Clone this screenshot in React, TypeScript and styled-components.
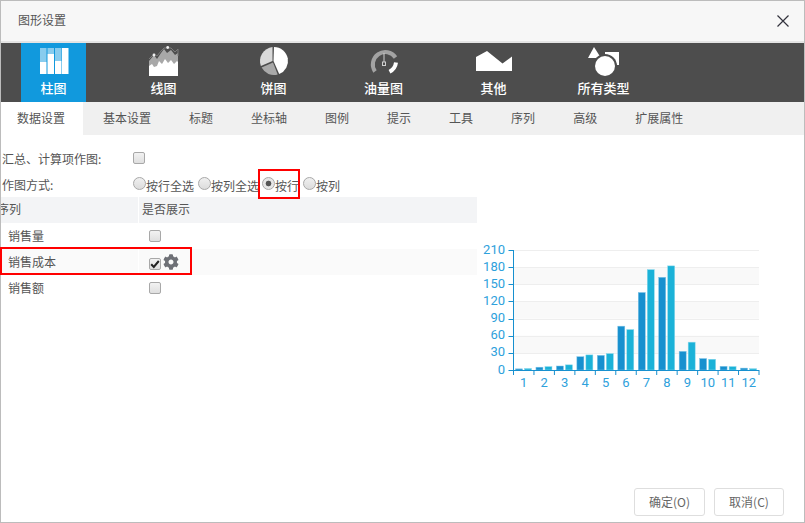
import React from "react";
import styled, { createGlobalStyle } from "styled-components";
import { FaCog } from "react-icons/fa";

const Global = createGlobalStyle`
  html, body { margin: 0; padding: 0; background: #fff; }
  * { box-sizing: border-box; }
  body { font-family: "Noto Sans CJK SC", "Liberation Sans", sans-serif; font-size: 12px; color: #555; }
`;

const Frame = styled.div`
  width: 805px; height: 523px; border: 1px solid #bcbcbc; background: #fff;
  display: flex; flex-direction: column; position: relative;
`;
const Header = styled.div`
  height: 42px; flex: none; background: #f7f7f7; border-bottom: 2px solid #e4e4e4;
  display: flex; align-items: center; justify-content: space-between; padding: 0 15px 4px 17px;
  color: #555; font-size: 12px;
`;
const Close = styled.svg`width: 12px; height: 12px; display: block; margin-top: 3px;`;
const TypeBar = styled.div`
  height: 59px; flex: none; background: #4d4d4d; display: flex; padding-left: 20px; gap: 45px;
`;
const TypeItem = styled.div<{ $active?: boolean }>`
  width: 65px; padding-top: 3px; display: flex; flex-direction: column; align-items: center;
  background: ${(p) => (p.$active ? "#1199dd" : "transparent")};
`;
const TypeIcon = styled.svg`width: 40px; height: 30px; display: block; flex: none;`;
const TypeLabel = styled.div`
  height: 24px; line-height: 24px; color: #fff; font-size: 13px; white-space: nowrap; font-weight: 500;
`;
const Tabs = styled.div`
  height: 33px; flex: none; background: #f0f0f0; display: flex; gap: 4px;
`;
const Tab = styled.div<{ $active?: boolean }>`
  padding: 0 18px 0 16px; line-height: 31px; color: #555; white-space: nowrap;
  background: ${(p) => (p.$active ? "#fff" : "transparent")};
`;
const Body = styled.div`
  flex: 1; display: flex; min-height: 0; padding-top: 10px;
`;
const LeftPanel = styled.div`width: 476px; flex: none;`;
const ChartPanel = styled.div`padding-top: 95px; flex: none;`;
const FormRow = styled.div`
  height: 26px; display: flex; align-items: center; padding-left: 1px; color: #555;
`;
const FormLabel = styled.div`width: 131px; flex: none; white-space: nowrap;`;
const Check = styled.span<{ $on?: boolean }>`
  width: 12px; height: 12px; flex: none; display: inline-flex; align-items: center; justify-content: center;
  border: 1px solid #a8a8a8; border-radius: 2px; background: linear-gradient(#f2f2f2, #dfdfdf);
  margin-top: ${(p) => (p.$on ? "3px" : "-1px")};
`;
const CheckMark = styled.svg`width: 10px; height: 10px; display: block;`;
const RadioGroup = styled.div`display: flex; gap: 4px; align-items: center; height: 100%;`;
const RadioItem = styled.div<{ $marked?: boolean }>`
  position: relative; z-index: 1; display: flex; align-items: center; height: 100%; white-space: nowrap;
  ${(p) =>
    p.$marked
      ? `margin-left: -1px; &::after { content: ""; position: absolute; left: -4px; right: -1px; top: -2px; height: 26px; border: 2px solid #f00; pointer-events: none; }`
      : ""}
`;
const RadioCircle = styled.span<{ $on?: boolean }>`
  width: 13px; height: 13px; flex: none; border-radius: 50%; border: 1px solid #a8a8a8; margin-top: -2px;
  background: ${(p) =>
    p.$on
      ? "radial-gradient(circle, #555 0, #555 2.5px, #e6e6e6 3.2px)"
      : "linear-gradient(#f0f0f0, #dcdcdc)"};
`;
const RadioText = styled.span`margin-top: 3px;`;
const TableRow = styled.div`
  position: relative; display: grid; grid-template-columns: 137px 1fr; column-gap: 1px; height: 26px;
  background: #fff;
`;
const HeadCell = styled.div<{ $clip?: boolean }>`
  background: #f3f4f6; line-height: 24px; padding-left: 3px; overflow: hidden; white-space: nowrap; color: #555;
  text-indent: ${(p) => (p.$clip ? "-7px" : "0")};
`;
const Cell = styled.div<{ $shade?: boolean }>`
  background: ${(p) => (p.$shade ? "#fafafa" : "#fff")}; display: flex; align-items: center; padding-left: 7px;
  color: #555; line-height: 26px;
`;
const CheckCell = styled(Cell)`padding-left: 10px; gap: 2px;`;
const Gear = styled(FaCog)`width: 16px; height: 16px; color: #6e7076; flex: none; margin-top: -1px;`;
const RowMark = styled.div`
  position: absolute; left: -1px; top: -2px; width: 192px; height: 28px; border: 2px solid #f00; pointer-events: none;
`;
const Chart = styled.svg`width: 292px; height: 160px; display: block;`;
const ChartText = styled.text`
  font-family: Roboto, "Liberation Sans", sans-serif; font-size: 13px; fill: #2ea1dc;
`;
const Footer = styled.div`
  flex: none; display: flex; justify-content: flex-end; gap: 9px; padding: 0 20px 6px 0;
`;
const Button = styled.div<{ $w: number }>`
  width: ${(p) => p.$w}px; height: 28px; border: 1px solid #dedede; border-radius: 3px; background: #fff;
  text-align: center; line-height: 26px; color: #666; font-size: 12px;
`;

const BarIcon = () => (
  <TypeIcon viewBox="0 0 40 30">
    <g fill="#fff">
      <rect x="6" y="2" width="6.5" height="14" opacity="0.5" />
      <rect x="6" y="16" width="6.5" height="12" />
      <rect x="13.5" y="2" width="6.5" height="6" opacity="0.5" />
      <rect x="13.5" y="8" width="6.5" height="20" />
      <rect x="21" y="2" width="6.5" height="13" opacity="0.5" />
      <rect x="21" y="15" width="6.5" height="13" />
      <rect x="28" y="2" width="6.5" height="26" />
    </g>
  </TypeIcon>
);
const LineIcon = () => (
  <TypeIcon viewBox="0 0 40 30">
    <polygon fill="#a8a8a8" points="5,15 10,9 13,13 17,7 20,3 23,7 27,4 31,9 34,7 34,30 5,30" />
    <polyline fill="none" stroke="#7a7a7a" strokeWidth="1" points="5,13 10,8 13,10 17,5 20,2 23,2 27,2 31,6 34,3 34,10" />
    <polygon fill="#fff" points="5,20 8,18 10,21 13,20 15,15 18,18 21,13 24,17 27,14 30,18 33,15 34,16 34,30 5,30" />
    <circle cx="10" cy="9" r="1.4" fill="#eee" />
    <circle cx="23.7" cy="1.5" r="1.4" fill="#eee" />
  </TypeIcon>
);
const PieIcon = () => (
  <TypeIcon viewBox="0 0 40 30">
    <path d="M18.5 1.1 A14 14 0 0 0 6.9 20 L18.5 15 Z" fill="#d9d9d9" />
    <path d="M7.6 21.6 A14 14 0 0 0 23.7 28.5 L19 16.5 Z" fill="#a9a9a9" />
    <path d="M20 1 A14 14 0 0 1 25.2 28 L19.5 15 Z" fill="#fff" />
  </TypeIcon>
);
const GaugeIcon = () => (
  <TypeIcon viewBox="0 0 40 30">
    <path d="M11 25.5 A12 12 0 1 1 31.5 11.5" fill="none" stroke="#a3a3a3" strokeWidth="4" />
    <path d="M32 16.5 A12 12 0 0 1 25.5 25.7" fill="none" stroke="#fff" strokeWidth="4" />
    <rect x="19.5" y="7" width="1" height="9" fill="#cfcfcf" />
    <rect x="18.5" y="16" width="3" height="3.5" fill="none" stroke="#cfcfcf" strokeWidth="1" />
  </TypeIcon>
);
const OtherIcon = () => (
  <TypeIcon viewBox="0 0 40 30">
    <polygon fill="#fff" points="2,11 13,5 28.5,17.5 38,10.5 38,25 2,25" />
  </TypeIcon>
);
const AllIcon = () => (
  <TypeIcon viewBox="0 0 40 30">
    <polygon fill="#fff" points="10,1 4,12 17,12" />
    <rect x="21" y="6" width="14" height="13" fill="#fff" />
    <circle cx="21" cy="20" r="12" fill="#4d4d4d" />
    <circle cx="21" cy="20" r="10" fill="#fff" />
  </TypeIcon>
);

const types: { label: string; Icon: React.FC; active?: boolean }[] = [
  { label: "柱图", Icon: BarIcon, active: true },
  { label: "线图", Icon: LineIcon },
  { label: "饼图", Icon: PieIcon },
  { label: "油量图", Icon: GaugeIcon },
  { label: "其他", Icon: OtherIcon },
  { label: "所有类型", Icon: AllIcon },
];
const tabs = ["数据设置", "基本设置", "标题", "坐标轴", "图例", "提示", "工具", "序列", "高级", "扩展属性"];
const radios = [
  { label: "按行全选" },
  { label: "按列全选" },
  { label: "按行", on: true },
  { label: "按列" },
];

const s1 = [2, 4.9, 7, 23.2, 25.6, 76.7, 135.6, 162.2, 32.6, 20, 6.4, 3.3];
const s2 = [2.6, 5.9, 9, 26.4, 28.7, 70.7, 175.6, 182.2, 48.7, 18.8, 6, 2.3];
const X0 = 513.5;
const X1 = 759;
const Y0 = 370;
const YT = 250;
const step = (X1 - X0) / 12;
const yOf = (v: number) => Y0 - ((Y0 - YT) * v) / 210;
const ticks = [0, 30, 60, 90, 120, 150, 180, 210];

const BarChart = () => (
  <Chart viewBox="477 240 292 160">
    {[[150, 180], [90, 120], [30, 60]].map(([a, b]) => (
      <rect key={a} x={X0} y={yOf(b)} width={X1 - X0} height={yOf(a) - yOf(b)} fill="#f9f9f9" />
    ))}
    {ticks.slice(1).map((t) => (
      <line key={t} x1={X0} x2={X1} y1={Math.round(yOf(t)) + 0.5} y2={Math.round(yOf(t)) + 0.5} stroke="#eeeeee" />
    ))}
    {s1.map((v, i) => (
      <rect key={i} x={X0 + i * step + 2} y={yOf(v)} width={7} height={Y0 - yOf(v)} fill="#1790cf" stroke="#7fc3e6" strokeWidth="0.5" />
    ))}
    {s2.map((v, i) => (
      <rect key={i} x={X0 + i * step + 11} y={yOf(v)} width={7} height={Y0 - yOf(v)} fill="#1bb2d8" stroke="#8ad8ec" strokeWidth="0.5" />
    ))}
    <line x1={X0} x2={X0} y1={YT} y2={Y0} stroke="#1790cf" />
    <line x1={X0} x2={X1} y1={Y0 + 0.5} y2={Y0 + 0.5} stroke="#1790cf" />
    {ticks.map((t) => (
      <line key={t} x1={X0 - 5} x2={X0} y1={Math.round(yOf(t)) + 0.5} y2={Math.round(yOf(t)) + 0.5} stroke="#1790cf" />
    ))}
    {Array.from({ length: 13 }, (_, i) => (
      <line key={i} x1={X0 + i * step} x2={X0 + i * step} y1={Y0} y2={Y0 + 5} stroke="#1790cf" />
    ))}
    {ticks.map((t) => (
      <ChartText key={t} x={505} y={yOf(t) + 3.5} textAnchor="end">{t}</ChartText>
    ))}
    {s1.map((_, i) => (
      <ChartText key={i} x={X0 + (i + 0.5) * step} y={387} textAnchor="middle">{i + 1}</ChartText>
    ))}
  </Chart>
);

export default function App() {
  return (
    <>
      <Global />
      <Frame>
        <Header>
          <span>图形设置</span>
          <Close viewBox="0 0 12 12">
            <path d="M0.5 0.5 L11.5 11.5 M11.5 0.5 L0.5 11.5" stroke="#33333d" strokeWidth="1.2" fill="none" />
          </Close>
        </Header>
        <TypeBar>
          {types.map(({ label, Icon, active }) => (
            <TypeItem key={label} $active={active}>
              <Icon />
              <TypeLabel>{label}</TypeLabel>
            </TypeItem>
          ))}
        </TypeBar>
        <Tabs>
          {tabs.map((t, i) => (
            <Tab key={t} $active={i === 0}>{t}</Tab>
          ))}
        </Tabs>
        <Body>
          <LeftPanel>
            <FormRow>
              <FormLabel>汇总、计算项作图:</FormLabel>
              <Check />
            </FormRow>
            <FormRow>
              <FormLabel>作图方式:</FormLabel>
              <RadioGroup>
                {radios.map((r) => (
                  <RadioItem key={r.label} $marked={r.on}>
                    <RadioCircle $on={r.on} />
                    <RadioText>{r.label}</RadioText>
                  </RadioItem>
                ))}
              </RadioGroup>
            </FormRow>
            <TableRow>
              <HeadCell $clip>序列</HeadCell>
              <HeadCell>是否展示</HeadCell>
            </TableRow>
            <TableRow>
              <Cell>销售量</Cell>
              <CheckCell><Check /></CheckCell>
            </TableRow>
            <TableRow>
              <Cell $shade>销售成本</Cell>
              <CheckCell $shade>
                <Check $on>
                  <CheckMark viewBox="0 0 10 10">
                    <path d="M1.2 5.2 L3.8 8 L8.8 2" fill="none" stroke="#222" strokeWidth="2" />
                  </CheckMark>
                </Check>
                <Gear />
              </CheckCell>
              <RowMark />
            </TableRow>
            <TableRow>
              <Cell>销售额</Cell>
              <CheckCell><Check /></CheckCell>
            </TableRow>
          </LeftPanel>
          <ChartPanel>
            <BarChart />
          </ChartPanel>
        </Body>
        <Footer>
          <Button $w={71}>确定(O)</Button>
          <Button $w={70}>取消(C)</Button>
        </Footer>
      </Frame>
    </>
  );
}
